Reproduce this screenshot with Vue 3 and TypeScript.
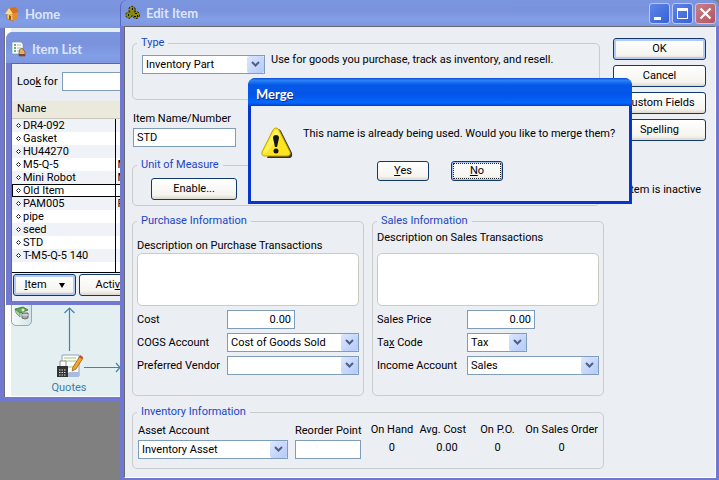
<script setup lang="ts">
import { ref } from 'vue'

interface ListedItem { name: string; description: string }

const items: ListedItem[] = [
  { name: 'DR4-092', description: '' },
  { name: 'Gasket', description: '' },
  { name: 'HU44270', description: '' },
  { name: 'M5-Q-5', description: 'M' },
  { name: 'Mini Robot', description: 'M' },
  { name: 'Old Item', description: '' },
  { name: 'PAM005', description: 'P' },
  { name: 'pipe', description: '' },
  { name: 'seed', description: '' },
  { name: 'STD', description: '' },
  { name: 'T-M5-Q-5 140', description: '' },
]
const selected = ref('Old Item')
const lookFor = ref('')
const itemName = ref('STD')
const cost = ref('0.00')
const price = ref('0.00')
const reorder = ref('')
</script>

<template>
  <div class="desktop">
    <section class="window home">
      <header class="titlebar">
        <svg class="title-icon" width="16" height="16" viewBox="0 0 16 16">
          <path d="M3 7v6l6 2V8z" fill="#f7c558" stroke="#a8611c" stroke-width=".6" />
          <path d="M9 8v7l5-3V6z" fill="#e98a2e" />
          <path d="M1 8 5 2l7-1 3 5-5 1-2 1z" fill="#d9701d" />
          <path d="M1 8 5 2l4 6z" fill="#fbdc8e" />
          <path d="M5 9v4.500l2 .5v-4z" fill="#a34b17" />
        </svg>
        <h1>Home</h1>
      </header>
      <div class="home-body">
        <div class="flow">
          <span class="money">
            <svg width="16" height="14" viewBox="0 0 16 14">
              <path d="M1 3 9 1l5 3-8 3z" fill="#63a850" stroke="#2f7137" stroke-width=".8" />
              <path d="m1 3 5 4v4L2 7z" fill="#a7d795" stroke="#3d7e3c" stroke-width=".6" />
              <circle cx="9" cy="4" r="1.500" fill="#d8efc8" />
              <path d="M8 7h6v5q-3 2-6 0z" fill="#aaa" stroke="#555" stroke-width=".8" />
              <path d="M8 9h6" stroke="#eee" />
            </svg>
          </span>
          <svg class="paths" width="110" height="72" viewBox="0 0 110 72" fill="none">
            <g stroke="#3f86a8" stroke-width="1.200">
              <path d="M58.500 45V2M53.500 7l5-5 5 5M73 61.500h37M105 57l4 4.500-4 4.500" />
            </g>
            <path d="M51 49h17v21H51z" fill="#fff" stroke="#8fa3bd" />
            <path d="M53 52h12M53 55h12M53 61h12" stroke="#9bc47a" />
            <path d="M58 66h10v5H54z" fill="#a9bbe0" />
            <path d="M49 55h6v7h-6z" fill="#fff" stroke="#777" stroke-width=".8" />
            <path d="M46 60h11v11H46z" fill="#333" />
            <path d="M48 64h7M48 66.500h7M48 69h7" stroke="#ddd" stroke-dasharray="1.500 1" />
            <path d="m61 65 1-4 7-11 3 2-7 11z" fill="#f4a623" stroke="#8f4a11" stroke-width=".7" />
            <path d="m68 51 1-2 3 2-1 2z" fill="#d8453a" />
          </svg>
          <a class="quotes" href="#quotes">Quotes</a>
        </div>
      </div>
    </section>

    <section class="window item-list">
      <header class="titlebar">
        <svg class="title-icon" width="16" height="16" viewBox="0 0 16 16">
          <path d="M1 1h9l2 2v10H1z" fill="#fff" stroke="#7a8ca8" stroke-width=".7" />
          <path d="M3 4h2M3 7h2M3 10h2" stroke="#2d9a45" stroke-width="1.500" />
          <path d="M6 4h4M6 7h4M6 10h3" stroke="#9bb" />
          <path d="M8 11q0-3 3-4l3 4v4H8z" fill="#e8ad62" stroke="#75502e" stroke-width=".7" />
          <path d="M8 13h6v2H8z" fill="#7d4428" />
        </svg>
        <h1>Item List</h1>
      </header>
      <div class="list-body">
        <div class="search">
          <label for="look">Loo<u>k</u> for</label>
          <input id="look" v-model="lookFor" class="text" type="text">
        </div>
        <table class="items">
          <thead><tr><th class="name">Name</th><th></th></tr></thead>
          <tbody>
            <tr
              v-for="item in items"
              :key="item.name"
              :class="{ selected: item.name === selected }"
              @click="selected = item.name"
            >
              <td class="name">
                <svg width="5" height="5" viewBox="0 0 5 5"><path d="M2.500.5l2 2-2 2-2-2z" fill="#fff" stroke="#222" /></svg>{{ item.name }}
              </td>
              <td>{{ item.description }}</td>
            </tr>
            <tr class="filler"><td class="name"></td><td></td></tr>
          </tbody>
        </table>
        <div class="list-actions">
          <button class="btn default" type="button">
            <span><u>I</u>tem</span>
            <svg width="6" height="5" viewBox="0 0 6 5"><path d="M0 0h6L3 5z" fill="#000" /></svg>
          </button>
          <button class="btn wide" type="button">
            <span>Acti<u>v</u>ities</span>
            <svg width="6" height="5" viewBox="0 0 6 5"><path d="M0 0h6L3 5z" fill="#000" /></svg>
          </button>
        </div>
      </div>
    </section>

    <section class="window edit">
      <header class="titlebar">
        <svg class="title-icon" width="16" height="16" viewBox="0 0 16 16">
          <g fill="#8d8a0a" stroke="#1c1c00" stroke-width="1" stroke-dasharray="2 1.500">
            <circle cx="7" cy="4.500" r="3.200" />
            <circle cx="4" cy="10" r="3.200" />
            <circle cx="11" cy="10" r="3.500" />
          </g>
          <path d="M6 7h3v3H6z" fill="#8d8a0a" />
          <path d="M7 3h1v2H7zM3 9h1v2H3zM10 8h2v1h-2zM9 11h2v1H9zM12 10h1v2h-1z" fill="#111" />
        </svg>
        <h1>Edit Item</h1>
        <div class="caption-buttons">
          <button type="button" aria-label="Minimize">
            <svg width="19" height="19" viewBox="0 0 19 19"><path d="M4 13h7v3H4z" fill="#fff" /></svg>
          </button>
          <button type="button" aria-label="Maximize">
            <svg width="19" height="19" viewBox="0 0 19 19"><path d="M4 4h11v11H4zM5 7v7h9V7z" fill="#fff" fill-rule="evenodd" /></svg>
          </button>
          <button class="close" type="button" aria-label="Close">
            <svg width="19" height="19" viewBox="0 0 19 19"><path d="m4.500 4.500 10 10m0-10-10 10" stroke="#fff" stroke-width="2.200" /></svg>
          </button>
        </div>
      </header>
      <form class="edit-body" @submit.prevent>
        <div class="form">
          <fieldset class="type">
            <legend>Type</legend>
            <div class="type-row">
              <span class="combo">
                <select aria-label="Type"><option>Inventory Part</option></select>
                <svg viewBox="0 0 17 17"><path d="m5 6 3.500 3.500L12 6" /></svg>
              </span>
              <p>Use for goods you purchase, track as inventory, and resell.</p>
            </div>
          </fieldset>

          <div class="item-name">
            <label for="name">Item Name/Number</label>
            <input id="name" v-model="itemName" class="text" type="text">
          </div>

          <fieldset class="unit">
            <legend>Unit of Measure</legend>
            <button class="btn" type="button">Enable...</button>
          </fieldset>

          <div class="pair">
            <fieldset class="info">
              <legend>Purchase Information</legend>
              <label class="desc" for="pdesc">Description on Purchase Transactions</label>
              <textarea id="pdesc"></textarea>
              <div class="rows">
                <label for="cost">Cost</label>
                <input id="cost" v-model="cost" class="text amount" type="text">
                <label for="cogs">COGS Account</label>
                <span class="combo">
                  <select id="cogs"><option>Cost of Goods Sold</option></select>
                  <svg viewBox="0 0 17 17"><path d="m5 6 3.500 3.500L12 6" /></svg>
                </span>
                <label for="vendor">Preferred Vendor</label>
                <span class="combo">
                  <select id="vendor"><option></option></select>
                  <svg viewBox="0 0 17 17"><path d="m5 6 3.500 3.500L12 6" /></svg>
                </span>
              </div>
            </fieldset>
            <fieldset class="info">
              <legend>Sales Information</legend>
              <label class="desc upper" for="sdesc">Description on Sales Transactions</label>
              <textarea id="sdesc"></textarea>
              <div class="rows">
                <label for="price">Sales Price</label>
                <input id="price" v-model="price" class="text amount" type="text">
                <label for="tax">Ta<u>x</u> Code</label>
                <span class="combo short">
                  <select id="tax"><option>Tax</option></select>
                  <svg viewBox="0 0 17 17"><path d="m5 6 3.500 3.500L12 6" /></svg>
                </span>
                <label for="income">Income Account</label>
                <span class="combo">
                  <select id="income"><option>Sales</option></select>
                  <svg viewBox="0 0 17 17"><path d="m5 6 3.500 3.500L12 6" /></svg>
                </span>
              </div>
            </fieldset>
          </div>

          <fieldset class="inventory">
            <legend>Inventory Information</legend>
            <div class="inventory-row">
              <div class="field asset">
                <label for="asset">Asset Account</label>
                <span class="combo">
                  <select id="asset"><option>Inventory Asset</option></select>
                  <svg viewBox="0 0 17 17"><path d="m5 6 3.500 3.500L12 6" /></svg>
                </span>
              </div>
              <div class="field reorder">
                <label for="reorder">Reorder Point</label>
                <input id="reorder" v-model="reorder" class="text" type="text">
              </div>
              <table class="stock">
                <colgroup><col class="c-hand"><col class="c-avg"><col class="c-po"><col></colgroup>
                <thead><tr><th>On Hand</th><th>Avg. Cost</th><th>On P.O.</th><th>On Sales Order</th></tr></thead>
                <tbody><tr><td>0</td><td class="avg">0.00</td><td>0</td><td>0</td></tr></tbody>
              </table>
            </div>
          </fieldset>
        </div>

        <div class="side">
          <button class="btn default" type="submit">OK</button>
          <button class="btn" type="button">Cancel</button>
          <button class="btn" type="button">Custom Fields</button>
          <button class="btn" type="button">Spellin<u>g</u></button>
          <label class="inactive"><input type="checkbox"> Item is inactive</label>
        </div>
      </form>
    </section>

    <section class="merge" role="dialog" aria-labelledby="merge-title">
      <header><h2 id="merge-title">Merge</h2></header>
      <div class="merge-body">
        <svg width="32" height="32" viewBox="0 0 32 32">
          <path d="M17 2q2 0 3 2l11 22q1 5-3 5H6z" fill="#33333a" />
          <path d="M15 1q2 0 3 2l11 22q1 4-3 4H4q-4 0-3-4L12 3q1-2 3-2z" fill="#ffe51f" stroke="#c5a300" />
          <path d="M15 3q1 0 2 2l2 4-14 17-2 0q-1-1 0-2L13 5q1-2 2-2z" fill="#fff45e" />
          <path d="M12 11q0-3 3-3t3 3l-2 9h-2z" fill="#161616" />
          <circle cx="15" cy="24" r="2.500" fill="#161616" />
        </svg>
        <div class="merge-content">
          <p>This name is already being used. Would you like to merge them?</p>
          <div class="merge-actions">
            <button class="btn" type="button"><u>Y</u>es</button>
            <button class="btn focused" type="button"><u>N</u>o</button>
          </div>
        </div>
      </div>
    </section>
  </div>
</template>

<style>
body { background: #808080; }
</style>

<style scoped>
* { box-sizing: border-box; }
.desktop {
  position: relative;
  min-height: 100vh;
  overflow: hidden;
  background: #808080;
  color: #000;
  font: 11px/14px "Tahoma", "Roboto", "DejaVu Sans", sans-serif;
}
button, input, select, textarea { font: inherit; color: inherit; }
h1, h2, p { margin: 0; }
u { text-underline-offset: 1px; }

.window {
  border: 4px solid #7079cf;
  border-top: 0;
  border-radius: 7px 7px 0 0;
  background: #7079cf;
}
.titlebar {
  display: flex;
  flex: none;
  align-items: center;
  gap: 5px;
  height: 26px;
  margin: 0 -4px;
  padding: 0 4px;
  border-radius: 7px 7px 0 0;
  background: linear-gradient(#7a96df, #7b92dc 40%, #819fe6 75%, #7f96e0);
}
.titlebar h1 {
  color: #dce5fb;
  font: bold 13px/18px "Trebuchet MS", "Lato", sans-serif;
}
.title-icon { flex: none; }

.home { position: absolute; left: 0; top: 0; width: 60%; border-radius: 0; }
.home .titlebar { height: 28px; border-radius: 0; }
.home-body { padding: 0 0 1px 6px; border-left: 1px solid #6c6e78; background: #fff; }
.flow { position: relative; height: 368px; padding-top: 272px; background: #e4eff2; }
.money {
  position: absolute;
  left: 0;
  top: 266px;
  display: grid;
  place-items: center;
  width: 21px;
  height: 32px;
  padding-top: 6px;
  border: 1px solid #93a9b6;
  border-radius: 5px;
  background: linear-gradient(90deg, #f5fafb, #d5e4e9);
}
.paths { display: block; margin-top: 6px; }
.quotes { display: block; width: 116px; margin-top: 3px; color: #427ba5; text-align: center; text-decoration: none; }

.item-list {
  position: absolute;
  left: 6px;
  top: 32px;
  width: 45%;
  border-width: 0 5px 4px;
}
.item-list .titlebar { height: 31px; margin: 0 -5px; padding: 2px 5px 0; }
.list-body { padding: 8px 0 5px; border: solid #67696e; border-width: 1px 0 0 1px; background: #ebeef3; }
.search { display: flex; align-items: center; gap: 6px; padding-left: 5px; }
.search label { width: 39px; white-space: nowrap; }
.search .text { flex: 1; }
.items { width: 100%; margin-top: 10px; border-collapse: collapse; border-bottom: 1px solid #000; background: #fff; }
.items th { height: 17px; padding: 0 5px; border-bottom: 1px solid #cbc7b8; background: #ebe9db; font-weight: normal; text-align: left; }
.items .name { width: 103px; }
.items td { height: 13px; padding: 0 2px; line-height: 13px; white-space: nowrap; }
.items td.name { padding: 0 4px; border-right: 1px solid #000; }
.items td svg { margin-right: 2px; vertical-align: 1px; }
.items tbody tr:nth-child(odd) { background: #eff3f8; }
.items tbody tr.selected { background: #fff; outline: 1px solid #000; outline-offset: -1px; }
.items tbody .filler { background: #fff; }
.items .filler td { height: 11px; }
.list-actions { display: flex; gap: 3px; padding: 1px 1px 0; }
.list-actions .btn { display: flex; align-items: center; justify-content: center; gap: 12px; width: 63px; }
.list-actions .wide { width: 96px; }

.text, .combo select {
  display: block;
  width: 100%;
  min-width: 0;
  height: 19px;
  margin: 0;
  padding: 0 3px;
  border: 1px solid #7f9db9;
  border-radius: 0;
  background: #fff;
  outline: 0;
}
.combo { position: relative; display: block; }
.combo select { appearance: none; padding-right: 18px; }
.combo svg {
  position: absolute;
  right: 1px;
  top: 1px;
  width: 17px;
  height: 17px;
  border-radius: 2px;
  background: linear-gradient(135deg, #dce7ff, #b4c9f8);
  pointer-events: none;
}
.combo path { fill: none; stroke: #4d6185; stroke-width: 2; }

.btn {
  height: 22px;
  padding: 0 6px;
  border: 1px solid #12396d;
  border-radius: 3px;
  background: linear-gradient(#fff, #f5f4ef 80%, #ddd8cc);
  white-space: nowrap;
}
.btn.default { box-shadow: inset 0 0 0 2px #b2cbf4; }
.btn.focused { box-shadow: inset 0 0 0 1px #a9c1ee; outline: 1px dotted #222; outline-offset: -3px; }

.edit {
  position: relative;
  display: flex;
  flex-direction: column;
  min-height: 100vh;
  margin-left: 120px;
  border-width: 0 3px 2px 4px;
}
.edit .titlebar { margin: 0 -3px 0 -4px; padding: 0 3px 0 4px; border-left: 1px solid #5a66c4; }
.caption-buttons { display: flex; gap: 2px; margin-left: auto; }
.caption-buttons button {
  width: 21px;
  height: 21px;
  padding: 0;
  border: 1px solid #b9c9f2;
  border-radius: 3px;
  background: linear-gradient(135deg, #5f85e6, #3562d8);
}
.caption-buttons .close { background: linear-gradient(135deg, #c98087, #af5560); }
.caption-buttons svg { display: block; }
.edit-body {
  display: flex;
  flex: 1;
  gap: 9px;
  padding: 9px 9px 8px 7px;
  border: 1px solid;
  border-color: #67696e #fff #fff #67696e;
  background: #ebeef3;
}
.form { flex: 1; min-width: 0; }
.side { display: flex; flex: none; flex-direction: column; gap: 5px; width: 93px; padding-top: 2px; }
.inactive { display: flex; align-items: center; justify-content: flex-end; gap: 4px; margin-top: 37px; padding-right: 5px; white-space: nowrap; }
.inactive input { width: 13px; height: 13px; margin: 0; }

fieldset { min-width: 0; margin: 0; padding: 0 4px; border: 1px solid #c8cdcc; border-radius: 5px; }
legend { padding: 0 4px; color: #1a46c4; }
.type { margin-right: 4px; padding: 5px 9px 25px; }
.type legend { margin-left: -5px; }
.type-row { display: flex; gap: 6px; }
.type-row .combo { width: 123px; }
.type-row p { line-height: 10px; }
.item-name { width: 104px; margin-top: 12px; padding-left: 1px; }
.item-name label { display: block; margin-bottom: 2px; white-space: nowrap; }
.unit { margin: 11px 4px 8px 0; padding: 6px 18px 5px; }
.unit legend { margin-left: -14px; }
.unit .btn { display: block; width: 86px; }
.pair { display: grid; grid-template-columns: 1fr 1fr; gap: 8px; }
.info { padding-bottom: 20px; }
.desc { display: block; height: 25px; padding-top: 11px; white-space: nowrap; }
.desc.upper { padding-top: 3px; }
textarea { display: block; width: 100%; height: 53px; margin: 0 0 4px; border: 1px solid #c9ccbf; border-radius: 5px; background: #fff; resize: none; outline: 0; }
.rows { display: grid; grid-template-columns: 90px 1fr; gap: 4px 0; align-items: center; }
.rows label { white-space: nowrap; }
.amount { width: 68px; text-align: right; }
.combo.short { width: 60px; }
.inventory { margin-top: 9px; padding: 5px 5px 8px; }
.inventory legend { margin-left: -1px; }
.inventory-row { display: flex; gap: 7px; }
.field { flex: none; }
.field label { display: block; margin-bottom: 2px; white-space: nowrap; }
.asset { width: 150px; }
.reorder { width: 66px; }
.stock { flex: 1; align-self: flex-start; table-layout: fixed; border-collapse: collapse; }
.stock th, .stock td { height: 18px; padding: 0; font-weight: normal; line-height: 12px; text-align: center; vertical-align: top; white-space: nowrap; }
.stock .avg { padding-right: 12px; text-align: right; }
.c-hand { width: 48px; }
.c-avg { width: 54px; }
.c-po { width: 56px; }

.merge {
  position: absolute;
  left: 248px;
  top: 78px;
  width: 384px;
  border: solid #0636cf;
  border-width: 0 3px 3px;
  border-radius: 8px 8px 0 0;
  background: #ebeef3;
}
.merge header {
  margin: 0 -3px;
  padding: 7px 8px 3px;
  border-radius: 7px 7px 0 0;
  background: linear-gradient(#0a4bd0, #2a83f7 8%, #0458e6 25%, #0355e8 60%, #0466ff 88%, #0340c4);
}
.merge h2 { color: #fff; font: bold 13px/18px "Trebuchet MS", "Lato", sans-serif; text-shadow: 1px 1px #0a2d86; }
.merge-body { display: flex; gap: 10px; padding: 21px 10px 20px; }
.merge-body svg { flex: none; }
.merge-content { flex: 1; white-space: nowrap; }
.merge-actions { display: flex; gap: 22px; margin-top: 20px; padding-left: 74px; }
.merge-actions .btn { width: 52px; height: 20px; }
</style>
